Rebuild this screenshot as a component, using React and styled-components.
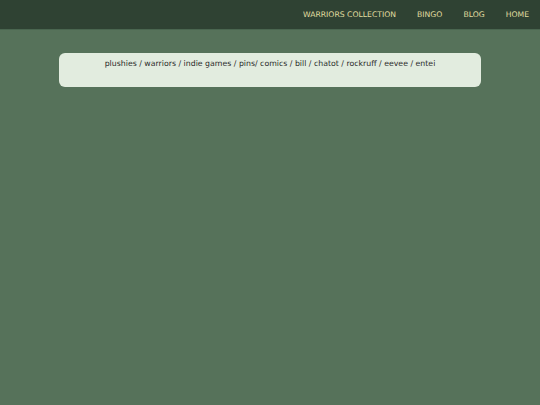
import styled, { createGlobalStyle } from 'styled-components';

const GlobalStyle = createGlobalStyle`
  html, body {
    margin: 0;
    padding: 0;
    background: #56725a;
    font-family: "DejaVu Sans", Verdana, sans-serif;
  }
`;

const links = ['Warriors Collection', 'Bingo', 'Blog', 'Home'];
const tags = ['plushies', 'warriors', 'indie games', 'pins', 'comics', 'bill', 'chatot', 'rockruff', 'eevee', 'entei'];

export default function App() {
  return (
    <Page>
      <GlobalStyle />
      <NavBar>
        {links.map((l) => (
          <NavLink key={l} href="#">{l}</NavLink>
        ))}
      </NavBar>
      <TagBox>
        <TagLine>
          {tags.map((t, i) => (
            <span key={t}>
              {t}
              {i < tags.length - 1 ? (t === 'pins' ? '/ ' : ' / ') : ''}
            </span>
          ))}
        </TagLine>
      </TagBox>
    </Page>
  );
}

const Page = styled.div`
  min-height: 405px;
  background: #56725a;
`;

const NavBar = styled.nav`
  display: flex;
  justify-content: flex-end;
  align-items: center;
  gap: 21px;
  height: 30px;
  padding-right: 11px;
  background: #2f4233;
  border-bottom: 1px solid #4a6650;
  box-sizing: border-box;
`;

const NavLink = styled.a`
  color: #e0dda0;
  font-size: 7.7px;
  text-transform: uppercase;
  text-decoration: none;
`;

const TagBox = styled.div`
  width: 422px;
  height: 34px;
  margin: 23px auto 0;
  background: #e2ecdf;
  border-radius: 6px;
  box-sizing: border-box;
  padding-top: 6px;
`;

const TagLine = styled.p`
  margin: 0;
  text-align: center;
  font-size: 7.8px;
  color: #2a2a2a;
`;
